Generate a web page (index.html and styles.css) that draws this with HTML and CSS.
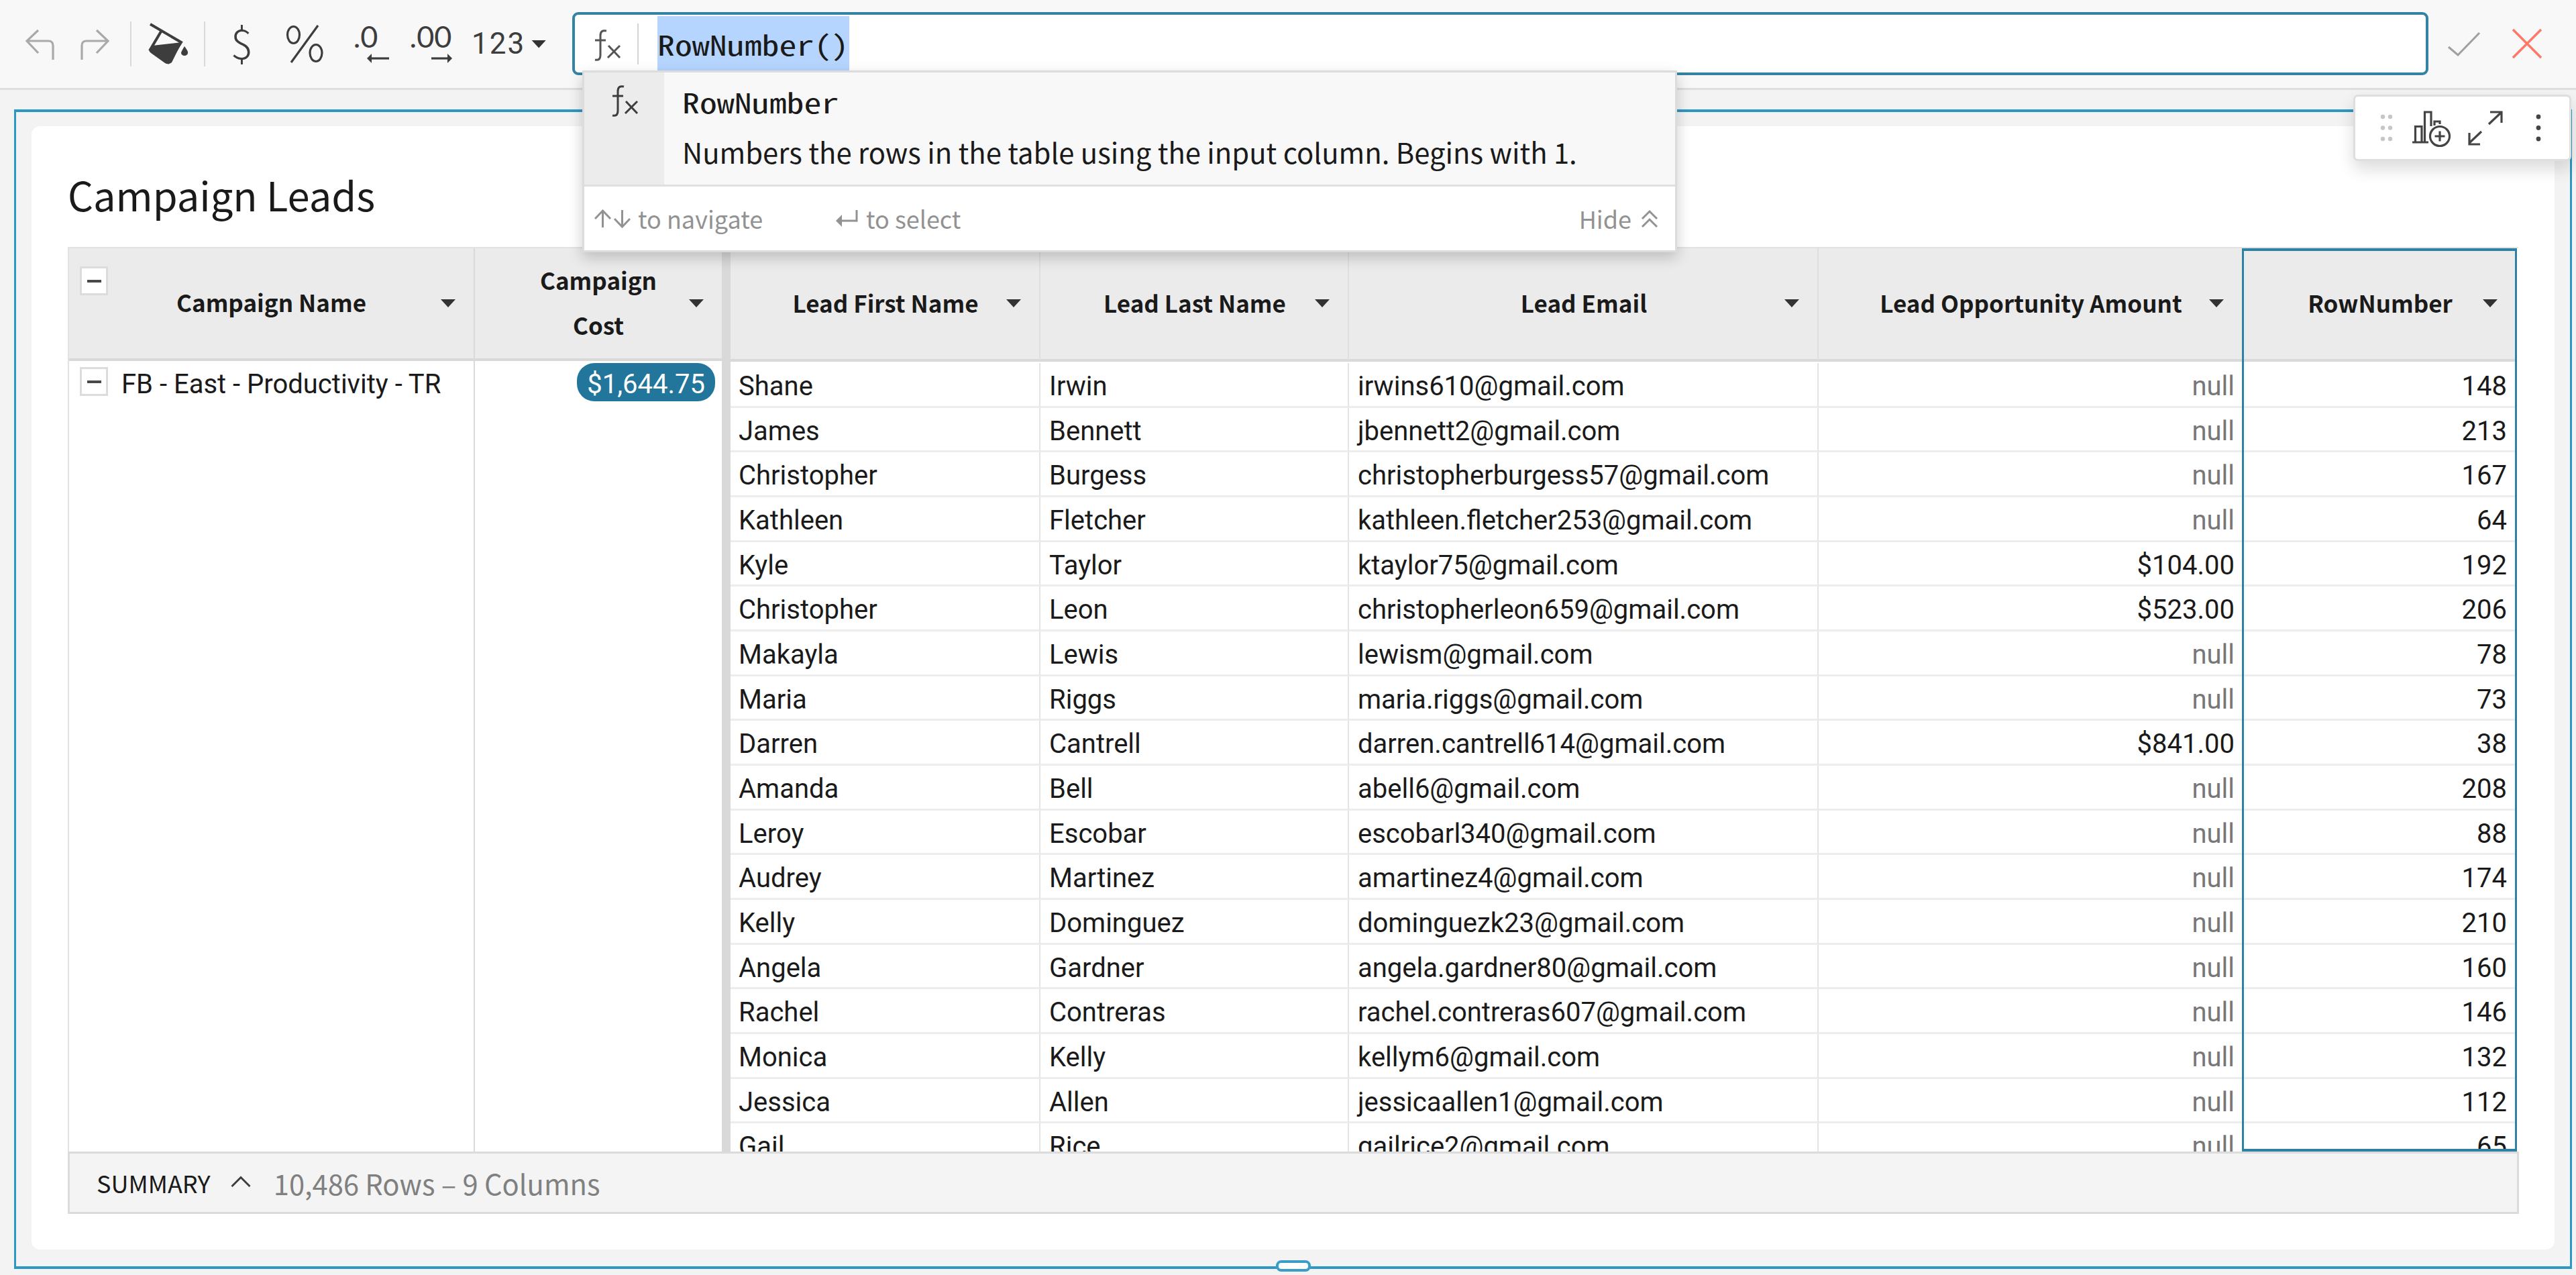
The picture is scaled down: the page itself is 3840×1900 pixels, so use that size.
FILE: index.html
```html
<!DOCTYPE html>
<html lang="en">
<head>
<meta charset="utf-8">
<title>Campaign Leads</title>
<link rel="stylesheet" href="styles.css">
</head>
<body>
<div class="app">
  <header class="toolbar">
    <svg class="tool muted" width="100" height="131" viewBox="0 0 100 131"><path d="M57 45 40 61 57 79M40 61H72Q79 61 79 68V89"/></svg>
    <svg class="tool muted" width="94" height="131" viewBox="100 0 94 131"><path d="M144 45 161 61 144 79M161 61H129Q122 61 122 68V89"/></svg>
    <span class="divider"></span>
    <svg class="tool" width="108" height="131" viewBox="196 0 108 131"><path stroke-width="4" d="M224 36 270 63 251 93 224 74 240 47"/><path class="solid" d="M227 68 271 63 256 93Q251 97 246 94L225 79Q221 76 223 73ZM275 69Q281 77 280 79A5 4 0 0 1 270 79Q270 77 275 69Z"/></svg>
    <span class="divider"></span>
    <svg class="tool" width="94" height="131" viewBox="306 0 94 131"><text class="glyph dollar" x="360" y="88">$</text></svg>
    <svg class="tool" width="110" height="131" viewBox="400 0 110 131"><path d="M474 38 434 93"/><ellipse cx="437.500" cy="52" rx="9" ry="12.500"/><ellipse cx="471" cy="79" rx="9" ry="12.500"/></svg>
    <svg class="tool" width="86" height="131" viewBox="510 0 86 131"><text class="glyph zero" x="545" y="71">.0</text><path d="M553 87H580"/><path class="solid" d="M547 87 554 80V94Z"/></svg>
    <svg class="tool" width="96" height="131" viewBox="596 0 96 131"><text class="glyph zero" x="642" y="71">.00</text><path d="M643 87H668"/><path class="solid" d="M674 87 667 80V94Z"/></svg>
    <button class="format"><span>123</span><i class="caret"></i></button>
    <div class="formula">
      <svg class="fx" width="40" height="48" viewBox="0 0 40 48"><path d="M18 2Q9 0 9 9V38Q9 47 1 45M1 16H17M21 24 38 42M38 24 20 42"/></svg>
      <span class="formula-divider"></span>
      <span class="formula-text"><span class="mono">RowNumber()</span></span>
    </div>
    <svg class="check" width="50" height="40" viewBox="0 0 50 40"><path d="M2 24 16 36 48 3"/></svg>
    <svg class="cancel" width="46" height="46" viewBox="0 0 46 46"><path d="M2 2 44 44M44 2 2 44"/></svg>
  </header>

  <main class="frame">
    <section class="card">
      <h1 class="title">Campaign Leads</h1>
      <div class="table">
        <div class="groups">
          <div class="th"><b class="toggle head-toggle"></b><span>Campaign Name</span><i class="caret"></i></div>
          <div class="th"><span>Campaign<br>Cost</span><i class="caret"></i></div>
          <div class="group-name"><b class="toggle"></b><span>FB - East - Productivity - TR</span></div>
          <div class="group-cost"><span class="pill">$1,644.75</span></div>
        </div>
        <div class="detail">
          <div class="heads">
            <div class="th"><span>Lead First Name</span><i class="caret"></i></div>
            <div class="th"><span>Lead Last Name</span><i class="caret"></i></div>
            <div class="th"><span>Lead Email</span><i class="caret"></i></div>
            <div class="th"><span>Lead Opportunity Amount</span><i class="caret"></i></div>
            <div class="th"><span>RowNumber</span><i class="caret"></i></div>
          </div>
          <div class="rows">
            <div class="row"><span>Shane</span><span>Irwin</span><span>irwins610@gmail.com</span><span class="null">null</span><span>148</span></div>
            <div class="row"><span>James</span><span>Bennett</span><span>jbennett2@gmail.com</span><span class="null">null</span><span>213</span></div>
            <div class="row"><span>Christopher</span><span>Burgess</span><span>christopherburgess57@gmail.com</span><span class="null">null</span><span>167</span></div>
            <div class="row"><span>Kathleen</span><span>Fletcher</span><span>kathleen.fletcher253@gmail.com</span><span class="null">null</span><span>64</span></div>
            <div class="row"><span>Kyle</span><span>Taylor</span><span>ktaylor75@gmail.com</span><span>$104.00</span><span>192</span></div>
            <div class="row"><span>Christopher</span><span>Leon</span><span>christopherleon659@gmail.com</span><span>$523.00</span><span>206</span></div>
            <div class="row"><span>Makayla</span><span>Lewis</span><span>lewism@gmail.com</span><span class="null">null</span><span>78</span></div>
            <div class="row"><span>Maria</span><span>Riggs</span><span>maria.riggs@gmail.com</span><span class="null">null</span><span>73</span></div>
            <div class="row"><span>Darren</span><span>Cantrell</span><span>darren.cantrell614@gmail.com</span><span>$841.00</span><span>38</span></div>
            <div class="row"><span>Amanda</span><span>Bell</span><span>abell6@gmail.com</span><span class="null">null</span><span>208</span></div>
            <div class="row"><span>Leroy</span><span>Escobar</span><span>escobarl340@gmail.com</span><span class="null">null</span><span>88</span></div>
            <div class="row"><span>Audrey</span><span>Martinez</span><span>amartinez4@gmail.com</span><span class="null">null</span><span>174</span></div>
            <div class="row"><span>Kelly</span><span>Dominguez</span><span>dominguezk23@gmail.com</span><span class="null">null</span><span>210</span></div>
            <div class="row"><span>Angela</span><span>Gardner</span><span>angela.gardner80@gmail.com</span><span class="null">null</span><span>160</span></div>
            <div class="row"><span>Rachel</span><span>Contreras</span><span>rachel.contreras607@gmail.com</span><span class="null">null</span><span>146</span></div>
            <div class="row"><span>Monica</span><span>Kelly</span><span>kellym6@gmail.com</span><span class="null">null</span><span>132</span></div>
            <div class="row"><span>Jessica</span><span>Allen</span><span>jessicaallen1@gmail.com</span><span class="null">null</span><span>112</span></div>
            <div class="row"><span>Gail</span><span>Rice</span><span>gailrice2@gmail.com</span><span class="null">null</span><span>65</span></div>
          </div>
          <div class="selection"></div>
        </div>
      </div>
      <footer class="summary">
        <span class="summary-label">SUMMARY</span>
        <svg width="30" height="18" viewBox="0 0 30 18"><path d="M1.500 16 15 2.500 28.500 16"/></svg>
        <span class="summary-count">10,486 Rows – 9 Columns</span>
      </footer>
    </section>
    <span class="handle"></span>
  </main>

  <div class="suggest">
    <div class="suggest-item">
      <div class="suggest-icon"><svg class="fx" width="40" height="48" viewBox="0 0 40 48"><path d="M18 2Q9 0 9 9V38Q9 47 1 45M1 16H17M21 24 38 42M38 24 20 42"/></svg></div>
      <div class="suggest-text"><code class="mono">RowNumber</code><p>Numbers the rows in the table using the input column. Begins with 1.</p></div>
    </div>
    <div class="suggest-foot">
      <svg width="54" height="28" viewBox="0 0 54 28"><path d="M12.500 27V2M1 14 12.500 2 24 14M41.500 1V26M30 14 41.500 26 53 14"/></svg>
      <span class="nav-hint">to navigate</span>
      <svg width="34" height="28" viewBox="0 0 34 28"><path d="M31 1V17H6"/><path class="solid" d="M0 17 9 8V26Z"/></svg>
      <span class="select-hint">to select</span>
      <span class="hide">Hide</span>
      <svg width="26" height="28" viewBox="0 0 26 28"><path d="M2 14 13 3 24 14M2 26 13 15 24 26"/></svg>
    </div>
  </div>

  <div class="element-menu">
    <svg width="319" height="93" viewBox="3511 144 319 93">
      <g class="grip"><circle cx="3552" cy="174" r="3.200"/><circle cx="3563" cy="174" r="3.200"/><circle cx="3552" cy="190.500" r="3.200"/><circle cx="3563" cy="190.500" r="3.200"/><circle cx="3552" cy="207" r="3.200"/><circle cx="3563" cy="207" r="3.200"/></g>
      <path d="M3596 212H3620M3600.500 212V188.500H3610V212M3614.500 212V167H3624V188M3629 187V181H3637V185"/><circle class="ring" cx="3637" cy="203" r="14.500"/><path d="M3629.500 203H3644.500M3637 195.500V210.500"/>
      <path d="M3710 185 3728 168M3712 167H3729V183M3699 196 3681 213M3681 198V215H3697"/>
      <g class="dots"><circle cx="3784" cy="174" r="3.400"/><circle cx="3784" cy="190.500" r="3.400"/><circle cx="3784" cy="207" r="3.400"/></g>
    </svg>
  </div>
</div>
</body>
</html>
```
FILE: styles.css
```css
* { box-sizing: border-box; }

body {
  margin: 0;
  background: #f3f3f3;
  color: #1a1a1a;
  font-family: "Noto Sans CJK SC", "Noto Sans", sans-serif;
}

svg { display: block; flex: none; fill: none; stroke: #3d3d3d; stroke-width: 3; }
.solid { fill: #3d3d3d; stroke: none; }

.app { position: relative; width: 3840px; height: 1900px; overflow: hidden; }

/* Toolbar */
.toolbar {
  display: flex;
  align-items: flex-start;
  height: 134px;
  background: #f8f8f8;
  border-bottom: 3px solid #dedede;
}
.tool { stroke-width: 3.2; }
.muted { stroke: #a9a9a9; }
.divider { flex: none; width: 2px; height: 67px; margin-top: 32px; background: #d9d9d9; }
.glyph { fill: #3d3d3d; stroke: none; font-weight: 300; text-anchor: middle; }
.dollar { font-size: 62px; }
.zero { font: 400 45px Lato, sans-serif; }
.format {
  display: flex;
  align-items: center;
  gap: 9px;
  width: 161px;
  height: 131px;
  padding: 0 0 0 11px;
  border: 0;
  background: none;
  color: #3d3d3d;
  font: 400 44px/131px Roboto, sans-serif;
  letter-spacing: 2px;
}
.format span { height: 131px; line-height: 131px; }

.caret {
  flex: none;
  width: 22px;
  height: 12px;
  background: #333;
  clip-path: polygon(0 0, 100% 0, 50% 100%);
}

.formula {
  display: flex;
  align-items: center;
  width: 2767px;
  height: 94px;
  margin-top: 18px;
  padding-left: 29px;
  border: 4px solid #3583a4;
  border-radius: 9px;
  background: #fff;
}
.fx { stroke-width: 3; }
.formula .fx { margin-top: 5px; stroke: #555; }
.formula-divider { width: 2px; height: 61px; margin: 0 28px 0 24px; background: #d4d4d4; }
.formula-text { width: 286px; height: 82px; background: #b5d5ff; }
/* Widened so that each character advances 26px at a 29px cap height */
.mono {
  display: block;
  width: 227px;
  font: 350 41px/87px "Noto Sans Mono CJK SC", "Liberation Mono", monospace;
  transform: scaleX(1.265);
  transform-origin: 0 50%;
}
.formula-text .mono { line-height: 82px; }
.check { margin: 46px 0 0 28px; stroke: #a0a0a0; }
.cancel { margin: 42px 0 0 46px; stroke: #ff7767; stroke-width: 3.5; }

/* Selected element */
.frame {
  position: relative;
  width: 3813px;
  height: 1728px;
  margin: 29px 0 0 21px;
  padding: 21px 23px;
  border: 3px solid #2e97c3;
  border-width: 4px 3px;
}
.card {
  height: 1674px;
  padding: 0 54px;
  border-radius: 13px;
  background: #fff;
}
.title { height: 180px; margin: 0; padding: 2px 0 0; font-size: 59.6px; font-weight: 400; line-height: 198px; }
.handle {
  position: absolute;
  left: 1878px;
  bottom: -8px;
  width: 52px;
  height: 17px;
  border: 4px solid #3c9ec6;
  border-radius: 8px;
  background: #fff;
}

.table { display: flex; width: 3653px; height: 1348px; border: solid #e2e2e2; border-width: 2px 0 0 2px; }
.groups { display: grid; grid-template: 168px 1fr / 605px 368px; }
.groups > * { border-right: 2px solid #dadada; }
.groups > :nth-child(2n) { border-right: 0; }
.detail { position: relative; width: 2676px; border-left: 13px solid #d9d9d9; overflow: hidden; }
.heads, .row { display: grid; grid-template-columns: 462px 460px 700px 633px 408px; }
.th {
  position: relative;
  display: flex;
  align-items: center;
  justify-content: center;
  height: 168px;
  padding-bottom: 3px;
  border-bottom: 4px solid #d9d9d9;
  background: #ebebeb;
  font-size: 35px;
  font-weight: 600;
  line-height: 66.67px;
  text-align: center;
}
.heads .th { height: 169px; padding-left: 2px; border-right: 2px solid #dfdfdf; }
.th .caret { position: absolute; right: 27px; top: 76px; }

.toggle {
  display: flex;
  align-items: center;
  justify-content: center;
  flex: none;
  width: 42px;
  height: 43px;
  border: 3px solid #dcdcdc;
  background: #fff;
}
.toggle::before { content: ""; width: 21px; height: 4px; background: #484848; }
.head-toggle { position: absolute; left: 16px; top: 27px; }
.group-name, .group-cost { font: 40px/69px Roboto, sans-serif; }
.group-name { display: flex; gap: 19px; padding: 9px 0 0 16px; }
.group-name span { margin-top: -10px; padding-left: 1px; line-height: 71px; }
.group-cost { display: flex; justify-content: flex-end; padding: 3px 10px 0 0; }
.pill { height: 57px; padding: 0 15px; border-radius: 26px; background: #23769b; color: #fff; line-height: 63px; }

.rows { padding-top: 2px; font: 40px/69px Roboto, sans-serif; }
.row { height: 66.66px; }
.row span { height: 66.66px; padding: 0 13px; border-right: 2px solid #e4e4e4; border-bottom: 3px solid #ededed; }
.row :first-child { padding-left: 12px; }
.row :nth-child(n + 4) { padding-right: 11px; text-align: right; }
.row :last-child { padding-right: 13px; border-right-color: transparent; }
.row .null { color: #777; }
.selection {
  position: absolute;
  left: 2253px;
  top: 0;
  width: 410px;
  height: 1346px;
  border: 3px solid #2f81a3;
  border-width: 4px 3px;
}

.summary {
  display: flex;
  align-items: center;
  width: 3654px;
  height: 93px;
  padding-left: 40px;
  border: 3px solid #dbdbdb;
  background: #f4f4f4;
}
.summary svg { margin: -3px 34px 0 30px; }
.summary-label { font-size: 36px; line-height: 87px; }
.summary-count { color: #808080; font-size: 41.7px; line-height: 86px; }

/* Function suggestion popup */
.suggest {
  position: absolute;
  left: 868px;
  top: 105px;
  width: 1632px;
  height: 271px;
  border: 3px solid #dcdcdc;
  background: #fff;
  box-shadow: 0 8px 20px rgba(0, 0, 0, .2);
}
.suggest-item { display: flex; height: 170px; border-bottom: 3px solid #e0e0e0; background: #f8f8f8; }
.suggest-icon { width: 119px; padding: 19px 0 0 41px; background: #ececec; }
.suggest-text { padding-left: 27px; }
.suggest-text code { height: 75px; }
.suggest-text p { margin: 0; font-size: 41.8px; line-height: 86px; white-space: nowrap; }
.suggest-foot {
  display: flex;
  align-items: center;
  height: 95px;
  padding: 0 25px 0 15px;
  color: #929292;
  font-size: 36px;
  line-height: 95px;
}
.suggest-foot svg { stroke: #929292; }
.suggest-foot .solid { fill: #929292; stroke: none; }
.nav-hint { width: 306px; padding-left: 11px; }
.select-hint { padding-left: 11px; }
.hide { margin: 0 14px 0 auto; }

/* Element actions */
.element-menu {
  position: absolute;
  left: 3508px;
  top: 141px;
  width: 325px;
  height: 99px;
  border: 3px solid #dedede;
  border-radius: 7px;
  background: #fff;
  box-shadow: 0 12px 24px rgba(0, 0, 0, .14);
}
.element-menu svg { stroke: #444; stroke-width: 3.2; }
.element-menu .grip { fill: #c6c6c6; stroke: none; }
.element-menu .dots { fill: #444; stroke: none; }
.ring { fill: #fff; }
```
